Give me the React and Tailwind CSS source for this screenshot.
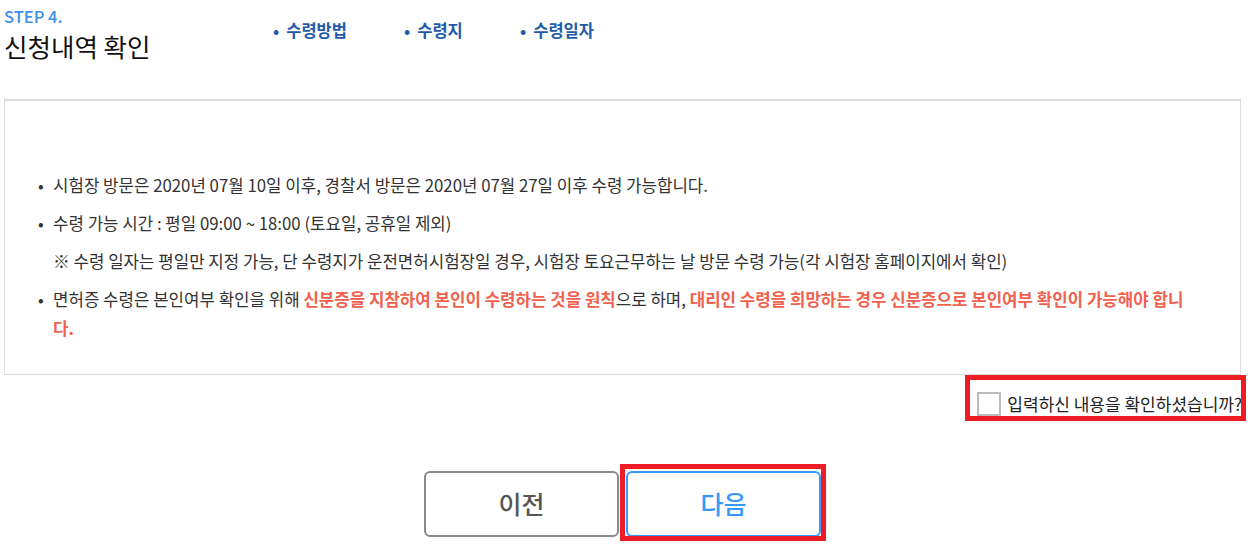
import React, { useState } from 'react';

const font = { fontFamily: '"Noto Sans CJK KR", "Noto Sans", sans-serif' };

const steps = ['수령방법', '수령지', '수령일자'];
const stepWidths = ['w-[131px]', 'w-[116px]', ''];

export default function App() {
  const [checked, setChecked] = useState(false);

  return (
    <div className="w-[1253px] h-[549px] bg-white text-[#333]" style={font}>
      {/* En-tête */}
      <div className="flex h-[99px]">
        <div className="pl-[4px] pt-[4px] w-[273px]">
          <div className="text-[16.5px] leading-[24px] font-medium text-[#3d8fe8]">STEP 4.</div>
          <h2 className="text-[25.5px] leading-[36px] text-[#111]">신청내역 확인</h2>
        </div>
        <ul className="flex pt-[17px] text-[16.5px] leading-[26px] font-bold text-[#1f5ca8]">
          {steps.map((s, i) => (
            <li key={s} className={`flex ${stepWidths[i]}`}>
              <span className="mr-[7px]">•</span>
              {s}
            </li>
          ))}
        </ul>
      </div>

      {/* Notices */}
      <div className="ml-[4px] mr-[12px] h-[276px] border border-[#dcdcdc] border-t-2 pt-[70px] pl-[33px] pr-[46px]">
        <ul className="text-[16.8px] leading-[29px] space-y-[9px]">
          <li className="flex">
            <span className="w-[15px] shrink-0">•</span>
            <span>시험장 방문은 2020년 07월 10일 이후, 경찰서 방문은 2020년 07월 27일 이후 수령 가능합니다.</span>
          </li>
          <li className="flex">
            <span className="w-[15px] shrink-0">•</span>
            <span>수령 가능 시간 : 평일 09:00 ~ 18:00 (토요일, 공휴일 제외)</span>
          </li>
          <li className="flex">
            <span className="w-[15px] shrink-0"></span>
            <span>※ 수령 일자는 평일만 지정 가능, 단 수령지가 운전면허시험장일 경우, 시험장 토요근무하는 날 방문 수령 가능(각 시험장 홈페이지에서 확인)</span>
          </li>
          <li className="flex">
            <span className="w-[15px] shrink-0">•</span>
            <p>
              면허증 수령은 본인여부 확인을 위해{' '}
              <b className="text-[#f2614d]">신분증을 지참하여 본인이 수령하는 것을 원칙</b>으로 하며,{' '}
              <b className="text-[#f2614d]">대리인 수령을 희망하는 경우 신분증으로 본인여부 확인이 가능해야 합니다.</b>
            </p>
          </li>
        </ul>
      </div>

      {/* Confirmation */}
      <div className="flex justify-end pr-[11px] pt-[17px]">
        <label className="relative flex items-center gap-[6px] cursor-pointer pl-[7px]">
          <div className="absolute -left-[5px] -right-[4px] -top-[17px] bottom-[-5px] border-[5px] border-[#ee1c25] pointer-events-none" />
          <input
            type="checkbox"
            checked={checked}
            onChange={(e) => setChecked(e.target.checked)}
            className="appearance-none w-[24px] h-[24px] border-2 border-[#bbb] bg-white checked:bg-[#3399ff]"
          />
          <span className="text-[17px] leading-[24px] text-[#222]">입력하신 내용을 확인하셨습니까?</span>
        </label>
      </div>

      {/* Actions */}
      <div className="flex justify-center gap-[7px] mt-[55px] pr-[8px]">
        <button className="w-[195px] h-[66px] rounded-[6px] border-2 border-[#8a8a8a] text-[25px] font-medium text-[#555]">
          이전
        </button>
        <div className="relative">
          <div className="absolute -left-[6px] -right-[5px] -top-[7px] -bottom-[4px] border-[5px] border-[#ee1c25] pointer-events-none" />
          <button className="w-[195px] h-[66px] rounded-[6px] border-2 border-[#3399ff] text-[25px] font-medium text-[#3399ff]">
            다음
          </button>
        </div>
      </div>
    </div>
  );
}
